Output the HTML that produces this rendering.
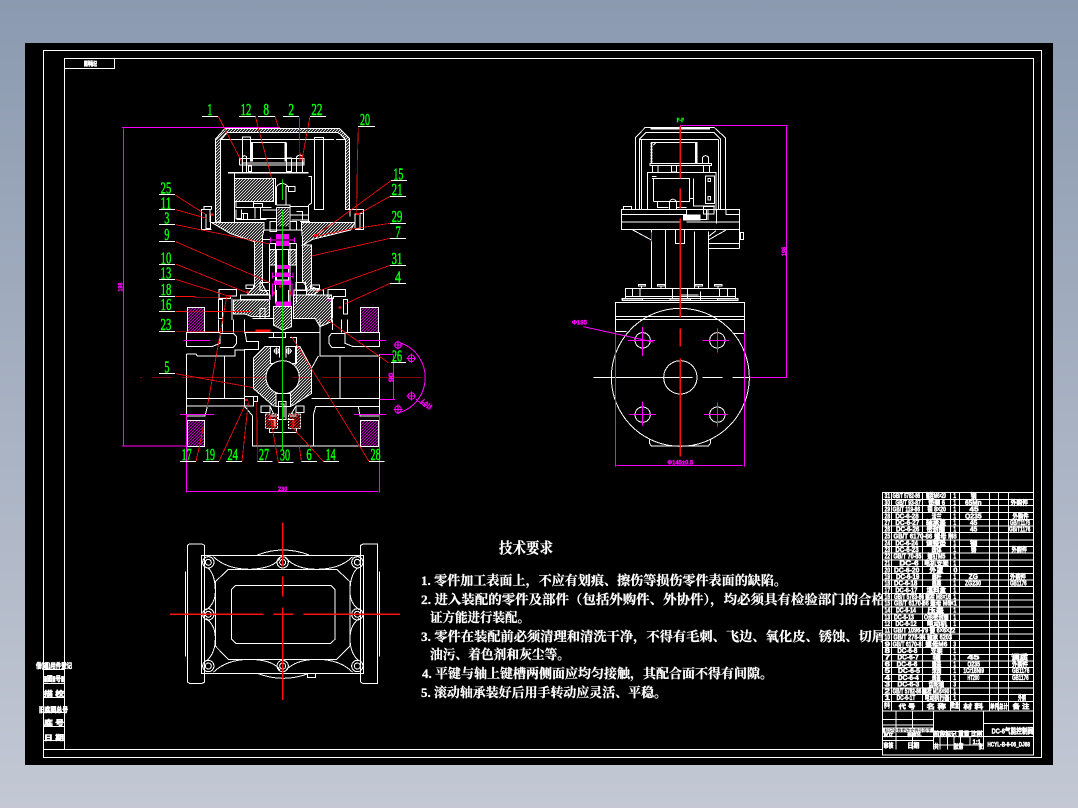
<!DOCTYPE html>
<html><head><meta charset="utf-8"><title>CAD</title>
<style>
html,body{margin:0;padding:0;background:#a8b2c3}
body{width:1078px;height:808px;overflow:hidden;background:linear-gradient(180deg,#8b9ab0 0%,#c3c8d4 100%)}
svg{position:absolute;left:0;top:0;display:block}
.c{font-family:"Liberation Serif","Noto Serif CJK SC",serif;font-weight:700;fill:#fff;stroke:#fff;stroke-width:.25}
.t{font-family:"Liberation Sans","Noto Sans CJK SC",sans-serif;font-weight:700;fill:#fff;stroke:#fff;stroke-width:.6}
g.z .t{stroke-width:1.6}
.n{font-family:"Liberation Serif",serif;fill:#00ff00;font-size:50px;stroke:#00ff00;stroke-width:1.6}
.m{font-family:"Liberation Sans",sans-serif;fill:#ff00ff;stroke:#ff00ff;stroke-width:1;font-weight:700}
</style></head>
<body>
<svg width="1078" height="808" viewBox="0 0 1078 808" xmlns="http://www.w3.org/2000/svg">
<defs>
<pattern id="h" patternUnits="userSpaceOnUse" width="9" height="9"><rect width="9" height="9" fill="#000"/><path d="M-2,11 L11,-2 M-2,2 L2,-2 M7,11 L11,7" stroke="#fff" stroke-width="2.4"/></pattern>
<pattern id="p" patternUnits="userSpaceOnUse" width="9" height="9"><rect width="9" height="9" fill="#000"/><path d="M-2,11 L11,-2 M-2,2 L2,-2 M7,11 L11,7" stroke="#e000e0" stroke-width="2.4"/></pattern>
<pattern id="r" patternUnits="userSpaceOnUse" width="9" height="9"><rect width="9" height="9" fill="#000"/><path d="M-2,11 L11,-2 M-2,2 L2,-2 M7,11 L11,7" stroke="#ff2020" stroke-width="2.4"/></pattern>
</defs>
<rect x="25" y="43" width="1028" height="722" fill="#000"/>
<g fill="none" stroke="#fff" stroke-width="1" shape-rendering="crispEdges">
<rect x="43.5" y="50.5" width="998" height="707"/>
<rect x="64.5" y="58.5" width="969" height="691"/>
<rect x="64.5" y="58.5" width="50" height="10"/>
<path d="M44,669.5H64M44,683.5H64M44,697.5H64M44,712.5H64M44,726.5H64M44,740.5H64M44,749.5H64"/>
</g>
<text class="t" x="84" y="66" font-size="6" textLength="13" lengthAdjust="spacingAndGlyphs">图样标记</text>
<text class="t" x="36" y="668" font-size="7" textLength="36" lengthAdjust="spacingAndGlyphs">借(通)用件登记</text>
<text class="t" x="44" y="681" font-size="7" textLength="20" lengthAdjust="spacingAndGlyphs">▮图▮号▮</text>
<text class="t" x="44" y="696" font-size="7" textLength="20" lengthAdjust="spacingAndGlyphs">描 校</text>
<text class="t" x="39" y="712" font-size="7" textLength="29" lengthAdjust="spacingAndGlyphs">旧底图总号</text>
<text class="t" x="44" y="725" font-size="7" textLength="20" lengthAdjust="spacingAndGlyphs">底 号</text>
<text class="t" x="44" y="740" font-size="7" textLength="20" lengthAdjust="spacingAndGlyphs">日 期</text>

<!-- Main section upper, zoom coords -->
<g transform="translate(110,90) scale(.33333)" fill="none" stroke="#fff" stroke-width="3" shape-rendering="crispEdges">
<path fill="url(#h)" d="M316,396V148L345,115H688L718,145V358H706V148L685,128H352L332,150V396Z"/>
<path d="M332,148H672M678,148H705"/>
<path d="M397,215V141H421V215M425,215V157H527V215"/><path stroke-width="7" d="M425,157V215M527,157V215"/>
<rect x="613" y="142" width="28" height="216"/>
<path d="M388,225V205H582V225H388M395,219H582"/>
<path d="M398,250V200Q402,194 410,200V250M560,250V200Q570,190 578,200V250M530,204H545V245H530ZM415,228H425V245H415Z"/>
<path stroke-width="5" d="M354,248H596"/>
<path d="M374,400V250M596,260H604V340L596,345M596,345V395"/>
<rect x="374" y="265" width="116" height="70" fill="url(#h)"/>
<path d="M490,265H496V345M378,335V352H485M378,358V385H395V358M395,370H412V390M430,335V352H458V340H430M435,352V385M452,352V385H500M458,360H500M380,388H470M400,372V388"/>
<path d="M500,345V290Q515,270 535,290V305H555V290H528V345M500,352H540V345H500M500,352V400M540,352V400"/>
<rect x="503" y="355" width="34" height="55" fill="url(#h)" stroke="none"/>
<path d="M540,350H596M540,375H595M560,365H578V390M545,390H595M480,395H500V425H480ZM540,395H560V420H540ZM570,395H600"/>
<!-- flange/bolts -->
<path d="M304,358H282V350H304V358M282,358H274V418H304M288,372V415H302V372M300,358V396"/>
<path d="M720,358H760V418H735M735,372H750V416H735ZM720,358V380M758,370H745"/>
<path fill="url(#h)" stroke-width="3" d="M304,397H462V420L458,436V455H458V585L475,614H412L433,590V455L360,430Z"/>
<path fill="url(#h)" d="M575,397H735L722,420L608,448L578,465H605V590L630,600L612,614H590V590L578,575V450L575,420Z"/>
<path d="M462,420H575M458,448H480M408,585H430V595H408ZM602,585H628V595H602ZM450,578H478V602H450ZM558,578H586V602H558ZM392,615H480V628H392ZM552,600H640V615H552Z"/>
<path fill="url(#h)" d="M370,630H478V680H425L405,672H370Z"/>
<path fill="url(#h)" d="M550,615H665V695L630,710L615,685H550Z"/>
<rect x="450" y="655" width="15" height="30"/>
<path d="M327,598H380V618H362V625H327ZM654,598H707V620H670V625H654Z"/>
<path d="M325,628H338V686H325ZM700,628H712V672H700ZM668,622V686M366,625V690M325,688V720M370,690V720M403,695V720M428,685H490M550,685H612M668,688V720M695,688V720M712,688V720M630,695V720"/>
<path fill="url(#h)" d="M478,478H500V525H478ZM535,478H558V525H535Z"/>
<path fill="url(#h)" d="M490,650H545V710L518,720L490,705Z"/>
<path d="M478,460V640M560,460V640M497,460V640M540,460V640M478,460H560M482,478H555M500,525V570H535V525M500,600V640M535,600V640"/>
<g stroke="#ff00ff" fill="#ff00ff">
<rect x="500" y="433" width="35" height="12"/><rect x="500" y="455" width="35" height="12"/><rect x="502" y="526" width="33" height="10"/><rect x="498" y="549" width="38" height="10"/><rect x="494" y="573" width="47" height="11"/><rect x="498" y="636" width="43" height="11"/>
<path d="M482,443V458M553,443V458M482,450H553M487,548V565M549,548V565M488,560H548M488,580V620M546,580V620M475,630H480M652,630H665"/>
</g>
<rect x="232" y="652" width="52" height="68" fill="url(#p)"/>
<rect x="752" y="652" width="54" height="68" fill="url(#p)"/>
<g stroke="#ff00ff"><path d="M36,112H510M40,116V640"/></g>
<g stroke="#ff1010" stroke-width="2.4">
<path d="M325,79L395,215M436,79L485,265M495,79L505,112M568,79L570,215M600,79L575,215M745,109L742,212L740,375M843,272L675,395L612,440M840,319L745,372M840,400L720,418L610,440M840,445L605,498M840,526L620,605M840,580L705,642M197,316L285,372M197,359L290,385M197,404L480,462M197,455L480,578M197,522L415,610M197,568L355,618M197,619H255L255,622H360M197,664H425"/>
<path stroke-width="6" d="M738,372H750M302,374H310M612,435H622M355,618H365M410,605H416M685,652H695M507,590H515M492,605V614M540,605V614"/>
</g>
<path stroke="#00e000" d="M518,268V330M518,360V720"/>
<g fill="#fff" stroke="#fff"><path d="M276,79H324M387,79H436M444,79H495M519,79H567M600,79H648M744,109H795M843,272H891M840,319H888M840,400H888M840,445H888M840,526H888M840,580H888M147,314H195M147,359H195M147,404H195M147,454H195M147,524H195M147,569H195M147,619H195M147,664H195"/></g>
</g>
<g transform="translate(110,90) scale(.33333)" shape-rendering="auto">
<text class="m" transform="translate(38,605) rotate(-90)" x="0" y="0" font-size="20" textLength="27" lengthAdjust="spacingAndGlyphs" stroke-width="3">198</text>
<text class="n" x="292" y="75" textLength="15" lengthAdjust="spacingAndGlyphs">1</text>
<text class="n" x="392" y="75" textLength="32" lengthAdjust="spacingAndGlyphs">12</text>
<text class="n" x="460" y="75" textLength="17" lengthAdjust="spacingAndGlyphs">8</text>
<text class="n" x="535" y="75" textLength="17" lengthAdjust="spacingAndGlyphs">2</text>
<text class="n" x="604" y="75" textLength="33" lengthAdjust="spacingAndGlyphs">22</text>
<text class="n" x="750" y="105" textLength="30" lengthAdjust="spacingAndGlyphs">20</text>
<text class="n" x="850" y="268" textLength="30" lengthAdjust="spacingAndGlyphs">15</text>
<text class="n" x="845" y="315" textLength="33" lengthAdjust="spacingAndGlyphs">21</text>
<text class="n" x="845" y="396" textLength="32" lengthAdjust="spacingAndGlyphs">29</text>
<text class="n" x="856" y="442" textLength="16" lengthAdjust="spacingAndGlyphs">7</text>
<text class="n" x="845" y="522" textLength="32" lengthAdjust="spacingAndGlyphs">31</text>
<text class="n" x="855" y="577" textLength="18" lengthAdjust="spacingAndGlyphs">4</text>
<text class="n" x="152" y="310" textLength="32" lengthAdjust="spacingAndGlyphs">25</text>
<text class="n" x="152" y="355" textLength="32" lengthAdjust="spacingAndGlyphs">11</text>
<text class="n" x="163" y="400" textLength="15" lengthAdjust="spacingAndGlyphs">3</text>
<text class="n" x="163" y="450" textLength="15" lengthAdjust="spacingAndGlyphs">9</text>
<text class="n" x="152" y="520" textLength="32" lengthAdjust="spacingAndGlyphs">10</text>
<text class="n" x="152" y="565" textLength="32" lengthAdjust="spacingAndGlyphs">13</text>
<text class="n" x="152" y="615" textLength="32" lengthAdjust="spacingAndGlyphs">18</text>
<text class="n" x="152" y="660" textLength="32" lengthAdjust="spacingAndGlyphs">16</text>
</g>

<!-- Main section lower -->
<g transform="translate(110,280) scale(.33333)" fill="none" stroke="#fff" stroke-width="3" shape-rendering="crispEdges">
<rect x="232" y="82" width="52" height="75" fill="url(#p)"/>
<rect x="752" y="82" width="54" height="75" fill="url(#p)"/>
<rect x="232" y="422" width="52" height="78" fill="url(#p)"/>
<rect x="752" y="422" width="54" height="78" fill="url(#p)"/>
<path d="M325,118V157M337,118V157M370,118V157M403,118V157M630,118V230M695,118V157M712,118V157"/>
<path d="M230,157H330V190L305,200H230ZM330,160H370L380,170V190L370,202H330"/>
<path d="M808,157H705V190L730,200H808V157ZM705,160H665L657,170V190L665,202H705"/>
<path d="M403,157H630M405,157L410,185H445V208H403V378M490,157V172H527V157M475,172H490M540,172H560V200H570L605,265"/>
<path d="M230,222H258L262,228H375V210H403M230,222V408M230,355H403M230,378H405M230,408H285L292,380M343,228V355"/>
<path d="M808,222V408M630,228H808M690,228V355M605,355H808M617,380H808M745,380L750,408H808M617,380L610,405V498M603,268L625,228"/>
<path d="M403,378L428,408V498H745"/>
<path d="M403,350H430V378H403ZM430,350H442V365H430Z"/>
<path fill="url(#h)" d="M430,235L465,200H482V250H560V200H570L605,265V340L545,378H490L430,325Z"/>
<circle cx="518" cy="292" r="50" fill="#000"/>
<path d="M465,200H508V232M528,232V200H570M482,200V250M556,200V250"/>
<circle cx="500" cy="213" r="7"/><circle cx="536" cy="213" r="7"/>
<path d="M490,213H510M500,203V223M526,213H546M536,203V223"/>
<rect x="498" y="340" width="43" height="40" fill="#000"/>
<path d="M453,378H480V398H453ZM558,378H582V398H558ZM480,378L490,400V420M558,378L545,400V420M505,365H528V418H505ZM512,372H522V412"/>
<rect x="467" y="402" width="36" height="44" fill="url(#r)" stroke-dasharray="6 3"/>
<rect x="535" y="402" width="37" height="44" fill="url(#r)" stroke-dasharray="6 3"/>
<path d="M478,445V458H560V445M478,408H500M540,408H560M475,418H495V440M532,418H550V440"/>
<g stroke="#ff00ff">
<path d="M220,181H300M745,181H828M210,403H312M732,403H830M36,498H232M40,0V498M230,405V638M808,405V638M232,634H804M808,224H851M808,358H855M851,225V358"/>
<path d="M875,190A110,110 0 0 1 860,400"/>
<circle cx="864" cy="195" r="10"/><circle cx="904" cy="235" r="10"/><circle cx="904" cy="348" r="10"/><circle cx="864" cy="388" r="10"/>
<path d="M850,195H878M864,181V209M890,235H918M904,221V249M890,348H918M904,334V362M850,388H878M864,374V402M916,356L945,380"/>
</g>
<g stroke="#ff1010" stroke-width="2.4">
<path d="M90,292H96M126,292H186M216,292H466M546,292H606M636,292H936"/>
<path d="M258,544L268,500M280,440L268,500M292,380L350,50M327,544L403,380M396,544L415,365M442,544L440,365M505,547L480,405M574,544L568,498M640,544L545,440M777,544L545,170M835,248L650,118M197,155H480M197,281L430,323M197,50H255M197,95H425"/>
<path stroke-width="6" d="M405,360H414M436,151H482M490,420V440M550,420V440"/>
</g>
<path stroke="#00e000" d="M518,120V510"/>
<path d="M147,155H195M147,281H195M843,248H888M210,544H258M279,544H327M348,544H396M442,544H488M505,547H551M574,544H621M640,544H687M777,544H824"/>
</g>
<g transform="translate(110,280) scale(.33333)" shape-rendering="auto">
<text class="n" x="152" y="150" textLength="32" lengthAdjust="spacingAndGlyphs">23</text>
<text class="n" x="163" y="277" textLength="15" lengthAdjust="spacingAndGlyphs">5</text>
<text class="n" x="846" y="245" textLength="30" lengthAdjust="spacingAndGlyphs">26</text>
<text class="n" x="215" y="540" textLength="30" lengthAdjust="spacingAndGlyphs">17</text>
<text class="n" x="285" y="540" textLength="30" lengthAdjust="spacingAndGlyphs">19</text>
<text class="n" x="352" y="540" textLength="32" lengthAdjust="spacingAndGlyphs">24</text>
<text class="n" x="447" y="540" textLength="30" lengthAdjust="spacingAndGlyphs">27</text>
<text class="n" x="510" y="541" textLength="30" lengthAdjust="spacingAndGlyphs">30</text>
<text class="n" x="589" y="540" textLength="16" lengthAdjust="spacingAndGlyphs">6</text>
<text class="n" x="647" y="540" textLength="30" lengthAdjust="spacingAndGlyphs">14</text>
<text class="n" x="782" y="540" textLength="30" lengthAdjust="spacingAndGlyphs">28</text>
<text class="m" x="504" y="633" font-size="20" textLength="28" lengthAdjust="spacingAndGlyphs">230</text>
<text class="m" transform="translate(851,306) rotate(-90)" x="0" y="0" font-size="22" textLength="28" lengthAdjust="spacingAndGlyphs" stroke-width="3">90</text>
<text class="m" transform="translate(930,368) rotate(38)" x="0" y="0" font-size="24" textLength="36" lengthAdjust="spacingAndGlyphs">4-Φ18</text>
</g>

<!-- Right view upper -->
<g transform="translate(560,100) scale(.33333)" fill="none" stroke="#fff" stroke-width="3" shape-rendering="crispEdges">
<path d="M226,328V113L256,82H462L496,113V328M238,328V118L258,98H462L482,118V328M245,118V328M238,118H475M475,118V328"/>
<path stroke-width="6" d="M272,85H450"/>
<path d="M274,190V127H411V190M288,127L280,135"/><path stroke-width="6" stroke-dasharray="6 3" d="M274,127V190"/><path stroke-width="5" d="M408,127V190"/>
<path d="M270,190H455V197H270Z"/><path d="M278,197V216M294,197V216M335,197H350V216H335ZM430,197V216M448,197V216M428,190V172Q436,162 446,172V190"/>
<path d="M262,328V217H468V332M276,230H290M276,235H290"/>
<path d="M280,305V235H388V305H280M388,235V295H400V235M400,235V318H465M292,305V322H325M350,322H380M328,328V305Q338,290 350,305V328"/>
<rect x="436" y="228" width="28" height="82"/>
<path d="M444,235H452V245H444ZM444,290H452V300H444ZM190,328V320H215V328"/>
<path d="M184,328H538V388H184ZM184,343H380M184,366H360M380,366H538M498,328V343H538M380,328V358H440V328M430,320H462V342H430ZM444,330V360M470,330V370"/>
<rect x="370" y="345" width="50" height="15" fill="#fff"/>
<path d="M274,388V565M316,390V565M403,395V565M445,395V565M346,388V430H373V388M445,430H538M445,445H538M538,388V445M215,388L274,420M430,388H445M445,420L498,390M468,392L445,410"/>
<rect x="542" y="397" width="8" height="21"/>
<path stroke="#ff00ff" d="M274,398V425"/>
<path d="M235,553H257V558H235ZM292,553H315V558H292ZM405,553H428V558H405ZM463,553H486V558H463ZM245,558V566M303,558V566M416,558V566M474,558V566"/>
<path d="M196,566H526V590H196ZM218,566V590M240,566V590M338,566V595H383V566M360,585H416M478,566V590M502,566V590M421,575V600M186,595H248V600H186ZM330,595H392V600H330ZM472,595H534V600H472ZM196,590V595M526,590V595"/>
<g stroke="#ff00ff"><path d="M360,77H683M680,80V600"/></g>
<path stroke="#ff1010" stroke-width="4" d="M361,78V235M361,265V325M361,355V600"/>
</g>
<g transform="translate(560,100) scale(.33333)" shape-rendering="auto">
<text class="n" x="350" y="66" style="font-size:18px" textLength="22" lengthAdjust="spacingAndGlyphs">F-F</text>
<text class="m" transform="translate(678,468) rotate(-90)" x="0" y="0" font-size="18" textLength="27" lengthAdjust="spacingAndGlyphs" stroke-width="2">198</text>
</g>

<!-- Right view lower -->
<g transform="translate(560,280) scale(.33333)" fill="none" stroke="#fff" stroke-width="3" shape-rendering="crispEdges">
<path d="M166,68H553V110H166ZM166,118H553M166,118V155H200M553,118V160H520M232,110V118M490,110V118"/>
<path d="M188,55H534V62H188ZM186,62H534"/>
<rect x="166" y="110" width="387" height="8" fill="#000"/>
<path d="M166,110H553M166,118H553M166,68V118M553,68V118"/>
<circle cx="361" cy="292" r="207"/>
<circle cx="361" cy="292" r="50"/>
<circle cx="248" cy="181" r="23"/><circle cx="472" cy="181" r="23"/><circle cx="248" cy="404" r="23"/><circle cx="472" cy="404" r="23"/>
<path d="M268,478V490L274,498H445L451,490V478"/>
<path d="M100,292H398M428,292H488M518,292H568"/>
<g stroke="#ff00ff">
<path d="M204,181H285M428,181H507M207,404H288M432,404H504M248,141V228M472,145V218M248,364V436M472,367V440"/>
<path d="M166,155V560M553,155V560M170,556H547M568,292H680M680,0V292M70,140L280,186"/>
</g>
<path stroke="#ff1010" stroke-width="4" d="M361,0V112M361,145V200M361,235V530"/>
</g>
<g transform="translate(560,280) scale(.33333)" shape-rendering="auto">
<text class="m" x="322" y="554" font-size="20" textLength="78" lengthAdjust="spacingAndGlyphs" stroke-width="2">Φ145±0.5</text>
<text class="m" x="36" y="134" font-size="20" textLength="45" lengthAdjust="spacingAndGlyphs" stroke-width="2">Φ185</text>
</g>

<!-- Top view -->
<g transform="translate(170,510) scale(.33333)" fill="none" stroke="#fff" stroke-width="3" shape-rendering="crispEdges">
<path d="M52,516V106L58,102H96L104,106V516L96,520H58ZM47,185V440"/>
<path d="M572,516V106L580,102H622V520H578ZM628,185V440"/>
<path d="M95,137H580V490H95Z"/>
<path d="M262,135Q340,105 417,135M262,490Q340,520 417,490M412,490H436V502H412Z"/>
<path d="M197,226H482L495,238V388L482,400H197L185,388V238Z"/>
<path d="M175,178H500L540,215V408L500,448H175L136,408V215Z"/>
<path d="M130,140Q170,178 240,178Q310,175 330,145M348,145Q380,178 440,178Q510,178 548,140"/>
<path d="M130,487Q170,448 240,448Q310,450 330,480M348,480Q380,448 440,448Q510,448 548,487"/>
<path d="M115,175Q136,195 136,245Q136,280 108,300M108,325Q136,345 136,385Q136,430 110,452"/>
<path d="M562,175Q540,195 540,245Q540,280 568,300M568,325Q540,345 540,385Q540,430 566,452"/>
<path d="M136,215L175,178M136,408L175,448M540,215L500,178M540,408L500,448"/>
<circle cx="115" cy="157" r="17"/><circle cx="115" cy="157" r="9"/>
<circle cx="338" cy="157" r="17"/><circle cx="338" cy="157" r="9"/>
<circle cx="562" cy="157" r="17"/><circle cx="562" cy="157" r="9"/>
<circle cx="115" cy="313" r="17"/><circle cx="115" cy="313" r="9"/>
<circle cx="562" cy="313" r="17"/><circle cx="562" cy="313" r="9"/>
<circle cx="115" cy="468" r="17"/><circle cx="115" cy="468" r="9"/>
<circle cx="338" cy="468" r="17"/><circle cx="338" cy="468" r="9"/>
<circle cx="562" cy="468" r="17"/><circle cx="562" cy="468" r="9"/>
<path stroke="#ff1010" stroke-width="4" d="M0,313H280M310,313H370M400,313H690M338,37V170M338,200V260M338,292V570"/>
</g>

<!-- Tech requirements -->
<g shape-rendering="auto">
<text class="c" x="499" y="553" font-size="15" textLength="54" lengthAdjust="spacingAndGlyphs">技术要求</text>
<text class="c" x="421" y="585" font-size="13" textLength="366" lengthAdjust="spacingAndGlyphs">1. 零件加工表面上，不应有划痕、擦伤等损伤零件表面的缺陷。</text>
<text class="c" x="421" y="604" font-size="13" textLength="464" lengthAdjust="spacingAndGlyphs">2. 进入装配的零件及部件（包括外购件、外协件），均必须具有检验部门的合格</text>
<text class="c" x="430" y="622" font-size="13" textLength="100" lengthAdjust="spacingAndGlyphs">证方能进行装配。</text>
<text class="c" x="421" y="641" font-size="13" textLength="464" lengthAdjust="spacingAndGlyphs">3. 零件在装配前必须清理和清洗干净，不得有毛刺、飞边、氧化皮、锈蚀、切屑</text>
<text class="c" x="430" y="659" font-size="13" textLength="140" lengthAdjust="spacingAndGlyphs">油污、着色剂和灰尘等。</text>
<text class="c" x="422" y="678" font-size="13" textLength="351" lengthAdjust="spacingAndGlyphs">4. 平键与轴上键槽两侧面应均匀接触，其配合面不得有间隙。</text>
<text class="c" x="421" y="697" font-size="13" textLength="246" lengthAdjust="spacingAndGlyphs">5. 滚动轴承装好后用手转动应灵活、平稳。</text>
</g>

<!-- Parts table -->
<g transform="translate(870,485) scale(.33333)" fill="none" stroke="#fff" stroke-width="3" shape-rendering="crispEdges">
<rect x="38" y="22" width="452" height="788" fill="#000"/>
<path d="M38,43H490M38,62H490M38,83H490M38,103H490M38,123H490M38,143H490M38,165H490M38,184H490M38,204H490M38,225H490M38,245H490M38,266H490M38,285H490M38,305H490M38,325H490M38,345H490M38,366H490M38,387H490M38,407H490M38,427H490M38,447H490M38,467H490M38,488H490M38,508H490M38,528H490M38,548H490M38,568H490M38,589H490M38,609H490M38,629H490M38,649H490"/>
<path d="M64,22V678M158,22V678M242,22V678M268,22V678M358,22V678M386,22V678M416,22V678"/>
</g>
<g class="z" transform="translate(870,485) scale(.33333)" shape-rendering="auto">
<g font-size="21" text-anchor="start">
<text class="t" x="44" y="39" textLength="16" lengthAdjust="spacingAndGlyphs">31</text><text class="t" x="68" y="39" textLength="82" lengthAdjust="spacingAndGlyphs">GB/T 5782-86</text><text class="t" x="168" y="39" textLength="60" lengthAdjust="spacingAndGlyphs">螺栓M6×20</text><text class="t" x="250" y="39" textLength="8" lengthAdjust="spacingAndGlyphs">1</text><text class="t" x="302" y="39" textLength="18" lengthAdjust="spacingAndGlyphs">钢</text>
<text class="t" x="44" y="60" textLength="16" lengthAdjust="spacingAndGlyphs">30</text><text class="t" x="76" y="60" textLength="76" lengthAdjust="spacingAndGlyphs">GB/T 93-87</text><text class="t" x="175" y="60" textLength="50" lengthAdjust="spacingAndGlyphs">垫圈 6</text><text class="t" x="250" y="60" textLength="8" lengthAdjust="spacingAndGlyphs">1</text><text class="t" x="285" y="60" textLength="50" lengthAdjust="spacingAndGlyphs">65Mn</text><text class="t" x="422" y="60" textLength="52" lengthAdjust="spacingAndGlyphs">外购件</text>
<text class="t" x="44" y="80" textLength="16" lengthAdjust="spacingAndGlyphs">29</text><text class="t" x="68" y="80" textLength="82" lengthAdjust="spacingAndGlyphs">GB/T 119-86</text><text class="t" x="172" y="80" textLength="56" lengthAdjust="spacingAndGlyphs">销 8×20</text><text class="t" x="250" y="80" textLength="8" lengthAdjust="spacingAndGlyphs">1</text><text class="t" x="298" y="80" textLength="28" lengthAdjust="spacingAndGlyphs">45</text>
<text class="t" x="44" y="100" textLength="16" lengthAdjust="spacingAndGlyphs">28</text><text class="t" x="76" y="100" textLength="70" lengthAdjust="spacingAndGlyphs">DC-6-28</text><text class="t" x="185" y="100" textLength="30" lengthAdjust="spacingAndGlyphs">法兰</text><text class="t" x="250" y="100" textLength="8" lengthAdjust="spacingAndGlyphs">1</text><text class="t" x="285" y="100" textLength="50" lengthAdjust="spacingAndGlyphs">Q235</text><text class="t" x="428" y="100" textLength="48" lengthAdjust="spacingAndGlyphs">外购件</text>
<text class="t" x="44" y="120" textLength="16" lengthAdjust="spacingAndGlyphs">27</text><text class="t" x="76" y="120" textLength="72" lengthAdjust="spacingAndGlyphs">DC-6-27</text><text class="t" x="168" y="120" textLength="60" lengthAdjust="spacingAndGlyphs">轴承盖</text><text class="t" x="250" y="120" textLength="8" lengthAdjust="spacingAndGlyphs">1</text><text class="t" x="300" y="120" textLength="22" lengthAdjust="spacingAndGlyphs">45</text><text class="t" x="420" y="120" textLength="60" lengthAdjust="spacingAndGlyphs">GB/T1176</text>
<text class="t" x="44" y="140" textLength="16" lengthAdjust="spacingAndGlyphs">26</text><text class="t" x="78" y="140" textLength="70" lengthAdjust="spacingAndGlyphs">DC-6-26</text><text class="t" x="170" y="140" textLength="55" lengthAdjust="spacingAndGlyphs">密封圈</text><text class="t" x="250" y="140" textLength="8" lengthAdjust="spacingAndGlyphs">1</text><text class="t" x="300" y="140" textLength="22" lengthAdjust="spacingAndGlyphs">45</text><text class="t" x="417" y="140" textLength="64" lengthAdjust="spacingAndGlyphs">GB/T1176</text>
<text class="t" x="44" y="161" textLength="16" lengthAdjust="spacingAndGlyphs">25</text><text class="t" x="70" y="161" textLength="190" lengthAdjust="spacingAndGlyphs">GB/T 6170-86 螺母 M8</text>
<text class="t" x="44" y="181" textLength="16" lengthAdjust="spacingAndGlyphs">24</text><text class="t" x="76" y="181" textLength="68" lengthAdjust="spacingAndGlyphs">DC-6-24</text><text class="t" x="168" y="181" textLength="60" lengthAdjust="spacingAndGlyphs">调整垫</text><text class="t" x="250" y="181" textLength="8" lengthAdjust="spacingAndGlyphs">1</text><text class="t" x="300" y="181" textLength="22" lengthAdjust="spacingAndGlyphs">钢</text>
<text class="t" x="44" y="201" textLength="16" lengthAdjust="spacingAndGlyphs">23</text><text class="t" x="76" y="201" textLength="70" lengthAdjust="spacingAndGlyphs">DC-6-23</text><text class="t" x="185" y="201" textLength="30" lengthAdjust="spacingAndGlyphs">阀体</text><text class="t" x="250" y="201" textLength="8" lengthAdjust="spacingAndGlyphs">1</text><text class="t" x="303" y="201" textLength="16" lengthAdjust="spacingAndGlyphs">铸</text><text class="t" x="425" y="201" textLength="46" lengthAdjust="spacingAndGlyphs">外购件</text>
<text class="t" x="44" y="221" textLength="16" lengthAdjust="spacingAndGlyphs">22</text><text class="t" x="70" y="221" textLength="84" lengthAdjust="spacingAndGlyphs">GB/T 70-85</text><text class="t" x="172" y="221" textLength="54" lengthAdjust="spacingAndGlyphs">螺钉M5</text><text class="t" x="250" y="221" textLength="8" lengthAdjust="spacingAndGlyphs">1</text>
<text class="t" x="44" y="241" textLength="16" lengthAdjust="spacingAndGlyphs">21</text><text class="t" x="88" y="241" textLength="58" lengthAdjust="spacingAndGlyphs">DC-6</text><text class="t" x="162" y="241" textLength="74" lengthAdjust="spacingAndGlyphs">电机支架</text><text class="t" x="250" y="241" textLength="8" lengthAdjust="spacingAndGlyphs">1</text>
<text class="t" x="44" y="262" textLength="16" lengthAdjust="spacingAndGlyphs">20</text><text class="t" x="72" y="262" textLength="76" lengthAdjust="spacingAndGlyphs">DC-6-20</text><text class="t" x="178" y="262" textLength="42" lengthAdjust="spacingAndGlyphs">外罩</text><text class="t" x="250" y="262" textLength="12" lengthAdjust="spacingAndGlyphs">0</text>
<text class="t" x="44" y="282" textLength="16" lengthAdjust="spacingAndGlyphs">19</text><text class="t" x="78" y="282" textLength="70" lengthAdjust="spacingAndGlyphs">DC-6-19</text><text class="t" x="186" y="282" textLength="28" lengthAdjust="spacingAndGlyphs">阀杆</text><text class="t" x="250" y="282" textLength="8" lengthAdjust="spacingAndGlyphs">1</text><text class="t" x="296" y="282" textLength="28" lengthAdjust="spacingAndGlyphs">ZG</text><text class="t" x="420" y="282" textLength="48" lengthAdjust="spacingAndGlyphs">外购件</text>
<text class="t" x="44" y="302" textLength="16" lengthAdjust="spacingAndGlyphs">18</text><text class="t" x="72" y="302" textLength="70" lengthAdjust="spacingAndGlyphs">DC-6-18</text><text class="t" x="186" y="302" textLength="28" lengthAdjust="spacingAndGlyphs">阀座</text><text class="t" x="250" y="302" textLength="8" lengthAdjust="spacingAndGlyphs">1</text><text class="t" x="285" y="302" textLength="48" lengthAdjust="spacingAndGlyphs">ZG230</text><text class="t" x="420" y="302" textLength="50" lengthAdjust="spacingAndGlyphs">GB1176</text>
<text class="t" x="44" y="322" textLength="16" lengthAdjust="spacingAndGlyphs">17</text><text class="t" x="76" y="322" textLength="66" lengthAdjust="spacingAndGlyphs">DC-6-17</text><text class="t" x="170" y="322" textLength="58" lengthAdjust="spacingAndGlyphs">填料盒</text><text class="t" x="250" y="322" textLength="8" lengthAdjust="spacingAndGlyphs">1</text>
<text class="t" x="44" y="342" textLength="16" lengthAdjust="spacingAndGlyphs">16</text><text class="t" x="72" y="342" textLength="170" lengthAdjust="spacingAndGlyphs">GB/T 5783-86 螺栓 M8×16</text><text class="t" x="250" y="342" textLength="8" lengthAdjust="spacingAndGlyphs">1</text>
<text class="t" x="44" y="362" textLength="16" lengthAdjust="spacingAndGlyphs">15</text><text class="t" x="72" y="362" textLength="188" lengthAdjust="spacingAndGlyphs">GB/T 6170-86 螺母 M6×1</text>
<text class="t" x="44" y="383" textLength="16" lengthAdjust="spacingAndGlyphs">14</text><text class="t" x="78" y="383" textLength="60" lengthAdjust="spacingAndGlyphs">DC-6-14</text><text class="t" x="172" y="383" textLength="50" lengthAdjust="spacingAndGlyphs">压盖</text><text class="t" x="250" y="383" textLength="8" lengthAdjust="spacingAndGlyphs">1</text>
<text class="t" x="44" y="403" textLength="16" lengthAdjust="spacingAndGlyphs">13</text><text class="t" x="72" y="403" textLength="60" lengthAdjust="spacingAndGlyphs">DC-6-13</text><text class="t" x="162" y="403" textLength="74" lengthAdjust="spacingAndGlyphs">O形密封圈</text><text class="t" x="250" y="403" textLength="8" lengthAdjust="spacingAndGlyphs">1</text>
<text class="t" x="44" y="423" textLength="16" lengthAdjust="spacingAndGlyphs">12</text><text class="t" x="76" y="423" textLength="64" lengthAdjust="spacingAndGlyphs">DC-6-12</text><text class="t" x="170" y="423" textLength="62" lengthAdjust="spacingAndGlyphs">电动机</text><text class="t" x="250" y="423" textLength="8" lengthAdjust="spacingAndGlyphs">1</text>
<text class="t" x="44" y="443" textLength="16" lengthAdjust="spacingAndGlyphs">11</text><text class="t" x="70" y="443" textLength="186" lengthAdjust="spacingAndGlyphs">GB/T 1096-79 键 6×6×22</text>
<text class="t" x="44" y="463" textLength="16" lengthAdjust="spacingAndGlyphs">10</text><text class="t" x="70" y="463" textLength="176" lengthAdjust="spacingAndGlyphs">GB/T 276-94 轴承 6203</text>
<text class="t" x="44" y="484" textLength="16" lengthAdjust="spacingAndGlyphs">9</text><text class="t" x="68" y="484" textLength="86" lengthAdjust="spacingAndGlyphs">GB/T 6170-8</text><text class="t" x="166" y="484" textLength="66" lengthAdjust="spacingAndGlyphs">螺母M6</text><text class="t" x="250" y="484" textLength="8" lengthAdjust="spacingAndGlyphs">3</text>
<text class="t" x="44" y="504" textLength="16" lengthAdjust="spacingAndGlyphs">8</text><text class="t" x="82" y="504" textLength="60" lengthAdjust="spacingAndGlyphs">DC-6-8</text><text class="t" x="182" y="504" textLength="36" lengthAdjust="spacingAndGlyphs">支架</text><text class="t" x="250" y="504" textLength="8" lengthAdjust="spacingAndGlyphs">1</text>
<text class="t" x="44" y="524" textLength="16" lengthAdjust="spacingAndGlyphs">7</text><text class="t" x="82" y="524" textLength="64" lengthAdjust="spacingAndGlyphs">DC-6-7</text><text class="t" x="188" y="524" textLength="24" lengthAdjust="spacingAndGlyphs">轴</text><text class="t" x="250" y="524" textLength="8" lengthAdjust="spacingAndGlyphs">1</text><text class="t" x="292" y="524" textLength="36" lengthAdjust="spacingAndGlyphs">45</text><text class="t" x="424" y="524" textLength="50" lengthAdjust="spacingAndGlyphs">调质</text>
<text class="t" x="44" y="544" textLength="16" lengthAdjust="spacingAndGlyphs">6</text><text class="t" x="80" y="544" textLength="62" lengthAdjust="spacingAndGlyphs">DC-6-6</text><text class="t" x="186" y="544" textLength="28" lengthAdjust="spacingAndGlyphs">端盖</text><text class="t" x="250" y="544" textLength="8" lengthAdjust="spacingAndGlyphs">1</text><text class="t" x="292" y="544" textLength="38" lengthAdjust="spacingAndGlyphs">Q235</text><text class="t" x="426" y="544" textLength="48" lengthAdjust="spacingAndGlyphs">外购件</text>
<text class="t" x="44" y="564" textLength="16" lengthAdjust="spacingAndGlyphs">5</text><text class="t" x="84" y="564" textLength="66" lengthAdjust="spacingAndGlyphs">DC-6-5</text><text class="t" x="186" y="564" textLength="28" lengthAdjust="spacingAndGlyphs">球阀</text><text class="t" x="250" y="564" textLength="8" lengthAdjust="spacingAndGlyphs">1</text><text class="t" x="280" y="564" textLength="62" lengthAdjust="spacingAndGlyphs">1Cr18Ni9</text><text class="t" x="426" y="564" textLength="52" lengthAdjust="spacingAndGlyphs">GB1176</text>
<text class="t" x="44" y="585" textLength="16" lengthAdjust="spacingAndGlyphs">4</text><text class="t" x="84" y="585" textLength="62" lengthAdjust="spacingAndGlyphs">DC-6-4</text><text class="t" x="186" y="585" textLength="26" lengthAdjust="spacingAndGlyphs">阀盖</text><text class="t" x="250" y="585" textLength="8" lengthAdjust="spacingAndGlyphs">1</text><text class="t" x="292" y="585" textLength="36" lengthAdjust="spacingAndGlyphs">HT200</text><text class="t" x="426" y="585" textLength="50" lengthAdjust="spacingAndGlyphs">GB1176</text>
<text class="t" x="44" y="605" textLength="16" lengthAdjust="spacingAndGlyphs">3</text><text class="t" x="82" y="605" textLength="66" lengthAdjust="spacingAndGlyphs">DC-6-3</text><text class="t" x="176" y="605" textLength="46" lengthAdjust="spacingAndGlyphs">齿轮轴</text><text class="t" x="250" y="605" textLength="8" lengthAdjust="spacingAndGlyphs">3</text>
<text class="t" x="44" y="625" textLength="16" lengthAdjust="spacingAndGlyphs">2</text><text class="t" x="68" y="625" textLength="170" lengthAdjust="spacingAndGlyphs">GB/T 5782-86 螺栓 M16×90</text><text class="t" x="250" y="625" textLength="8" lengthAdjust="spacingAndGlyphs">1</text>
<text class="t" x="44" y="645" textLength="16" lengthAdjust="spacingAndGlyphs">1</text><text class="t" x="80" y="645" textLength="56" lengthAdjust="spacingAndGlyphs">DC-6-1T</text><text class="t" x="164" y="645" textLength="74" lengthAdjust="spacingAndGlyphs">电动执行器</text><text class="t" x="250" y="645" textLength="8" lengthAdjust="spacingAndGlyphs">1</text><text class="t" x="444" y="645" textLength="24" lengthAdjust="spacingAndGlyphs">外购</text>
</g>
</g>

<!-- Title block -->
<g transform="translate(870,620) scale(.33333)" fill="none" stroke="#fff" stroke-width="3" shape-rendering="crispEdges">
<path d="M38,273H490M38,298H190M38,315H190M38,349H190M38,362H190M78,273V388M127,273V388M190,273V388M340,273V388M340,310H490M340,350H490M190,335H340M190,350H340M190,375H340M210,350V388M232,350V388M252,350V388M272,350V375M300,350V375M40,362H78"/>
<rect x="38" y="324" width="152" height="12" fill="#fff"/>
<path d="M64,244V273M158,244V273M242,244V273M268,244V273M358,244V273M416,244V273"/>
</g>
<g class="z" transform="translate(870,620) scale(.33333)" shape-rendering="auto">
<g font-size="19">
<text class="t" x="42" y="263" textLength="18" lengthAdjust="spacingAndGlyphs">序号</text>
<text class="t" x="86" y="265" textLength="50" lengthAdjust="spacingAndGlyphs">代 号</text>
<text class="t" x="170" y="265" textLength="58" lengthAdjust="spacingAndGlyphs">名 称</text>
<text class="t" x="243" y="263" textLength="24" lengthAdjust="spacingAndGlyphs">数量</text>
<text class="t" x="280" y="265" textLength="60" lengthAdjust="spacingAndGlyphs">材 料</text>
<text class="t" x="360" y="265" textLength="54" lengthAdjust="spacingAndGlyphs">单件总计</text>
<text class="t" x="428" y="265" textLength="50" lengthAdjust="spacingAndGlyphs">备 注</text>
<text class="t" x="40" y="348" textLength="30" lengthAdjust="spacingAndGlyphs">设计</text>
<text class="t" x="112" y="348" textLength="42" lengthAdjust="spacingAndGlyphs">标准化</text>
<text class="t" x="40" y="382" textLength="30" lengthAdjust="spacingAndGlyphs">审核</text>
<text class="t" x="112" y="382" textLength="36" lengthAdjust="spacingAndGlyphs">日期</text>
<text class="t" x="192" y="348" textLength="145" lengthAdjust="spacingAndGlyphs">阶段标记 重量 比例</text>
<text class="t" x="308" y="372" textLength="24" lengthAdjust="spacingAndGlyphs">1:1</text>
<text class="t" x="192" y="385" textLength="14" lengthAdjust="spacingAndGlyphs">共</text>
<text class="t" x="250" y="385" textLength="30" lengthAdjust="spacingAndGlyphs">张第</text>
<text class="t" x="326" y="385" textLength="12" lengthAdjust="spacingAndGlyphs">张</text>
</g>
<text x="44" y="336" font-family="Liberation Sans,sans-serif" font-size="13" fill="#000" textLength="140" lengthAdjust="spacingAndGlyphs">标记处数更改文件号签字</text>
<text class="t" x="365" y="340" font-size="22" textLength="125" lengthAdjust="spacingAndGlyphs">DC-6气能控制阀</text>
<text class="t" x="352" y="380" font-size="20" textLength="128" lengthAdjust="spacingAndGlyphs">HCYL-B-8-06_DJ68</text>
</g>
</svg>
</body></html>
